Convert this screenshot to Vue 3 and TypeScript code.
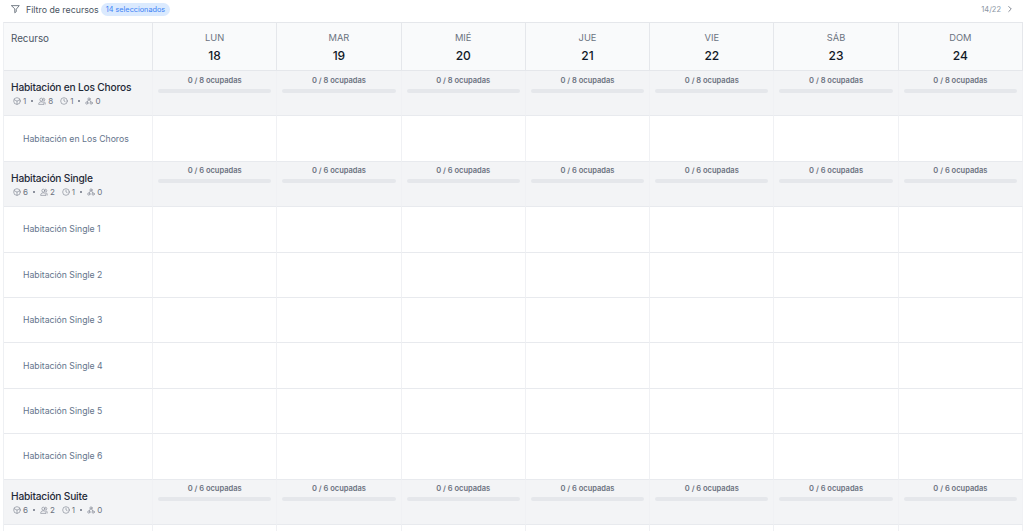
<script setup lang="ts">
const days = [
  { name: 'LUN', num: 18 },
  { name: 'MAR', num: 19 },
  { name: 'MIÉ', num: 20 },
  { name: 'JUE', num: 21 },
  { name: 'VIE', num: 22 },
  { name: 'SÁB', num: 23 },
  { name: 'DOM', num: 24 },
]

const groups = [
  { name: 'Habitación en Los Choros', units: 1, guests: 8, capacity: 8, items: ['Habitación en Los Choros'] },
  {
    name: 'Habitación Single',
    units: 6,
    guests: 2,
    capacity: 6,
    items: [1, 2, 3, 4, 5, 6].map((n) => `Habitación Single ${n}`),
  },
  // the next row starts at the bottom edge, only its empty cells show
  { name: 'Habitación Suite', units: 6, guests: 2, capacity: 6, items: [''] },
]
</script>

<template>
  <div class="page">
    <div class="toolbar">
      <div class="filter">
        <svg class="filter-icon" viewBox="0 0 24 24" fill="none" stroke="currentColor" stroke-width="2" stroke-linecap="round" stroke-linejoin="round">
          <path d="M2 3h20l-8 9.500V19l-4 3v-9.500z" />
        </svg>
        <span>Filtro de recursos</span>
        <span class="badge">14 seleccionados</span>
      </div>
      <div class="pager">
        <span>14/22</span>
        <svg class="chevron" viewBox="0 0 24 24" fill="none" stroke="currentColor" stroke-width="2" stroke-linecap="round" stroke-linejoin="round">
          <path d="M9 6l6 6-6 6" />
        </svg>
      </div>
    </div>

    <div class="grid">
      <div class="head first">Recurso</div>
      <div v-for="d in days" :key="d.name" class="head day">
        <span class="day-name">{{ d.name }}</span>
        <span class="day-num">{{ d.num }}</span>
      </div>

      <template v-for="g in groups" :key="g.name">
        <div class="cell first group">
          <div class="group-name">{{ g.name }}</div>
          <div class="stats">
            <svg class="stat-icon" viewBox="0 0 24 24"><circle cx="12" cy="12" r="10" /><path d="M3.500 8L12 12.500 20.500 8M12 12.500V22" /></svg>
            <span>{{ g.units }}</span>
            <i class="dot"></i>
            <svg class="stat-icon" viewBox="0 0 24 24"><circle cx="10" cy="8" r="4.500" /><path d="M2 21c0-4 3-6.500 8-6.500s8 2.500 8 6.500zM16 3.500a4.500 4.500 0 0 1 0 9M19 14.500c2 1 3 3.500 3 6.500" /></svg>
            <span>{{ g.guests }}</span>
            <svg class="stat-icon clock" viewBox="0 0 24 24"><circle cx="12" cy="12" r="10" /><path d="M12 6.500V12l3.500 2" /></svg>
            <span>1</span>
            <i class="dot"></i>
            <svg class="stat-icon" viewBox="0 0 24 24"><circle cx="12" cy="6" r="3.500" /><circle cx="5.500" cy="18" r="3.500" /><circle cx="18.500" cy="18" r="3.500" /><path d="M10 9l-3 5.500M14 9l3 5.500" /></svg>
            <span>0</span>
          </div>
        </div>
        <div v-for="d in days" :key="d.name" class="cell group occupancy">
          <span class="occ-label">0 / {{ g.capacity }} ocupadas</span>
          <span class="occ-bar"></span>
        </div>

        <template v-for="item in g.items" :key="item">
          <div class="cell first resource">{{ item }}</div>
          <div v-for="d in days" :key="d.name" class="cell"></div>
        </template>
      </template>
    </div>
  </div>
</template>

<style>
html,
body {
  margin: 0;
  background: #fff;
  overflow: hidden;
}
</style>

<style scoped>
.page {
  width: 1024px;
  height: 531px;
  overflow: hidden;
  font-family: Inter, "Liberation Sans", sans-serif;
  color: #4b5563;
}

.toolbar {
  height: 22px;
  box-sizing: border-box;
  padding: 0 9px 4px 11px;
  display: flex;
  align-items: center;
  justify-content: space-between;
}

.filter {
  display: flex;
  align-items: center;
  font-size: 8.800px;
  color: #4b5563;
}

.filter-icon {
  width: 9px;
  height: 10px;
  margin-right: 6px;
}

.badge {
  margin-left: 2px;
  padding: 2px 5px;
  border-radius: 7px;
  background: #dbeafe;
  color: #3b82f6;
  font-size: 7.300px;
  line-height: 9px;
}

.pager {
  display: flex;
  align-items: center;
  gap: 4px;
  font-size: 7.500px;
  color: #8b95a3;
}

.chevron {
  width: 10px;
  height: 10px;
  color: #6b7280;
}

.grid {
  margin: 0 1px 0 3px;
  display: grid;
  grid-template-columns: 149px repeat(7, 1fr);
  grid-auto-rows: 45.400px;
  grid-template-rows: 48px;
  border-top: 1px solid #e5e7eb;
  border-left: 1px solid #eef0f3;
}

.head {
  background: #f9fafb;
  border-right: 1px solid #e5e7eb;
  border-bottom: 1px solid #e5e7eb;
  box-sizing: border-box;
}

.head.first {
  padding: 10px 0 0 7px;
  font-size: 9.800px;
  color: #4b5563;
}

.day {
  display: flex;
  flex-direction: column;
  align-items: center;
  padding-top: 8px;
}

.day-name {
  font-size: 9.300px;
  line-height: 13px;
  color: #6b7280;
}

.day-num {
  margin-top: 4px;
  font-size: 12px;
  line-height: 15px;
  font-weight: 500;
  color: #111827;
}

.cell {
  box-sizing: border-box;
  border-right: 1px solid #f0f1f4;
  border-bottom: 1px solid #e8eaee;
  min-width: 0;
}

.group {
  background: #f3f4f6;
}

.first.group {
  padding: 9px 0 0 7px;
}

.group-name {
  font-size: 10.200px;
  letter-spacing: -0.200px;
  line-height: 14px;
  font-weight: 500;
  color: #1f2937;
  white-space: nowrap;
}

.stats {
  margin-top: 2px;
  padding-left: 2px;
  display: flex;
  align-items: center;
  font-size: 8px;
  line-height: 10px;
  color: #6b7280;
}

.stat-icon {
  width: 8px;
  height: 8px;
  margin-right: 2px;
  fill: none;
  stroke: currentColor;
  stroke-width: 1.600;
  stroke-linejoin: round;
  stroke-linecap: round;
}

.clock {
  margin-left: 7px;
}

.dot {
  width: 2px;
  height: 2px;
  margin: 0 5px;
  border-radius: 50%;
  background: #6b7280;
}

.occupancy {
  padding: 4.500px 5px 0;
  display: flex;
  flex-direction: column;
  align-items: center;
}

.occ-label {
  font-size: 7.500px;
  line-height: 10px;
  font-weight: 600;
  color: #6b7280;
}

.occ-bar {
  margin-top: 3px;
  width: 100%;
  height: 4px;
  border-radius: 2px;
  background: #e5e7eb;
}

.resource {
  display: flex;
  align-items: center;
  padding-left: 19px;
  font-size: 8.700px;
  color: #64748b;
}
</style>
